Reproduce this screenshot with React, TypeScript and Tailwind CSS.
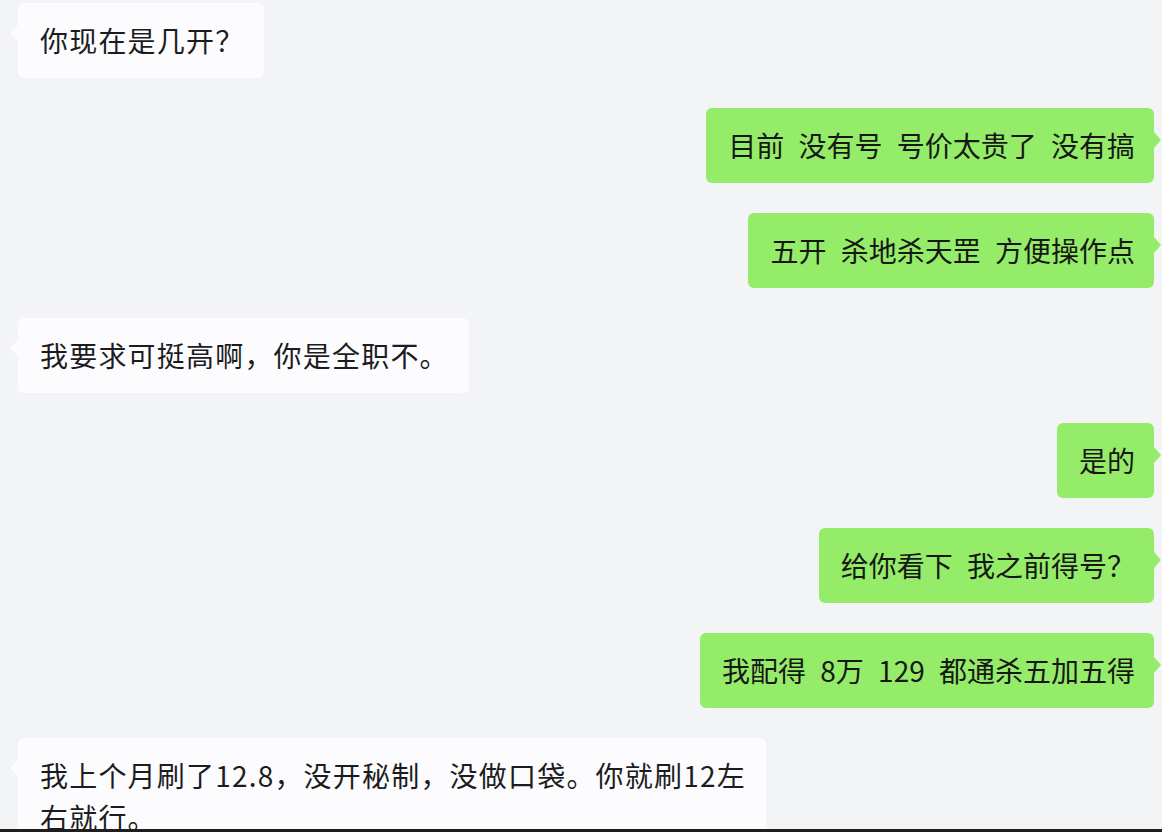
import React from 'react';

type Msg = { from: 'them' | 'me'; text: string };

const messages: Msg[] = [
  { from: 'them', text: '你现在是几开？' },
  { from: 'me', text: '目前 没有号 号价太贵了 没有搞' },
  { from: 'me', text: '五开 杀地杀天罡 方便操作点' },
  { from: 'them', text: '我要求可挺高啊，你是全职不。' },
  { from: 'me', text: '是的' },
  { from: 'me', text: '给你看下 我之前得号？' },
  { from: 'me', text: '我配得 8万 129 都通杀五加五得' },
  { from: 'them', text: '我上个月刷了12.8，没开秘制，没做口袋。你就刷12左右就行。' },
];

function Bubble({ msg }: { msg: Msg }) {
  const mine = msg.from === 'me';
  return (
    <div className={mine ? 'flex justify-end pr-[8px]' : 'flex justify-start pl-[18px]'}>
      <div
        className={
          mine
            ? 'relative max-w-[748px] rounded-[6px] bg-[#95ec69] pl-[22px] pr-[19px] pt-[16px] pb-[17px] text-[28px] leading-[42px] text-[#161816] [word-spacing:8px]'
            : 'relative max-w-[748px] rounded-[6px] bg-[#fcfcfe] pl-[22px] pr-[20px] pt-[16px] pb-[17px] text-[28px] leading-[42px] text-[#1c1c1e] tracking-[1.2px]'
        }
      >
        {mine ? (
          <span className="absolute right-[-7px] top-[24px] h-0 w-0 border-y-[8px] border-l-[7px] border-y-transparent border-l-[#95ec69]" />
        ) : (
          <span className="absolute left-[-8px] top-[22px] h-0 w-0 border-y-[8px] border-r-[8px] border-y-transparent border-r-[#fcfcfe]" />
        )}
        {msg.text}
      </div>
    </div>
  );
}

export default function App() {
  return (
    <div
      className="flex h-[832px] w-[1162px] flex-col overflow-hidden bg-[#f3f4f6]"
      style={{ fontFamily: '"Noto Sans CJK SC", "Noto Sans", sans-serif' }}
    >
      <div className="flex flex-1 flex-col gap-[30px] overflow-hidden pt-[3px]">
        {messages.map((m, i) => (
          <Bubble key={`msg-${i}`} msg={m} />
        ))}
      </div>
      <div className="h-[3px] shrink-0 bg-[#1e1e1e]" />
    </div>
  );
}
